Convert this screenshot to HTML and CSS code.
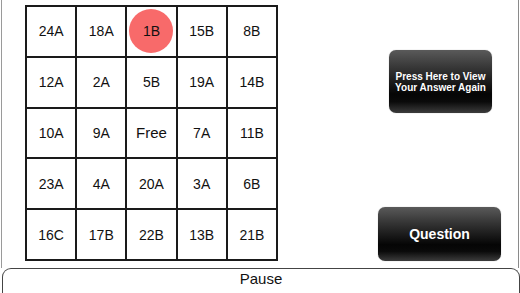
FILE: index.html
```html
<!DOCTYPE html>
<html>
<head>
<meta charset="utf-8">
<link rel="stylesheet" href="styles.css">
</head>
<body>
<div class="screen">
  <div class="main">
    <div class="board">
      <div class="cell">24A</div>
      <div class="cell">18A</div>
      <div class="cell"><span class="mark">1B</span></div>
      <div class="cell">15B</div>
      <div class="cell">8B</div>
      <div class="cell">12A</div>
      <div class="cell">2A</div>
      <div class="cell">5B</div>
      <div class="cell">19A</div>
      <div class="cell">14B</div>
      <div class="cell">10A</div>
      <div class="cell">9A</div>
      <div class="cell free">Free</div>
      <div class="cell">7A</div>
      <div class="cell">11B</div>
      <div class="cell">23A</div>
      <div class="cell">4A</div>
      <div class="cell">20A</div>
      <div class="cell">3A</div>
      <div class="cell">6B</div>
      <div class="cell">16C</div>
      <div class="cell">17B</div>
      <div class="cell">22B</div>
      <div class="cell">13B</div>
      <div class="cell">21B</div>
    </div>
    <div class="side">
      <button class="btn view">Press Here to View<br>Your Answer Again</button>
      <button class="btn question">Question</button>
    </div>
  </div>
  <div class="pause">Pause</div>
</div>
</body>
</html>
```
FILE: styles.css
```css
html, body {
  margin: 0;
  padding: 0;
  background: #fff;
}
body {
  width: 520px;
  height: 293px;
  overflow: hidden;
  font-family: "Liberation Sans", Arial, sans-serif;
}
.screen {
  display: flex;
  flex-direction: column;
  height: 293px;
}
.main {
  height: 268px;
  margin: 0 1px 0 1px;
  border-left: 1px solid #9a9a9a;
  border-right: 1px solid #8a8a8a;
  display: flex;
  box-sizing: border-box;
}
.board {
  margin: 5px 0 0 23px;
  display: grid;
  grid-template-columns: repeat(5, 48.2px);
  grid-template-rows: repeat(5, 48.8px);
  gap: 2px;
  padding: 2px;
  background: #1a1a1a;
  align-self: flex-start;
}
.cell {
  background: #fff;
  display: flex;
  align-items: center;
  justify-content: center;
  font-size: 14px;
  color: #111;
}
.free {
  font-size: 15px;
}
.mark {
  width: 44px;
  height: 44px;
  border-radius: 50%;
  background: #f86a6a;
  display: flex;
  align-items: center;
  justify-content: center;
}
.side {
  flex: 1;
  display: flex;
  flex-direction: column;
  align-items: flex-end;
  padding-top: 50px;
}
.btn {
  border: none;
  color: #fff;
  font-family: "Liberation Sans", Arial, sans-serif;
  font-weight: bold;
  border-radius: 7px;
  background: linear-gradient(to bottom, #5a5a5a 0%, #3a3a3a 25%, #1c1c1c 50%, #050505 70%, #0a0a0a 82%, #3c3c3c 100%);
  box-shadow: 0 0 1px rgba(0,0,0,0.4);
  padding: 0;
}
.view {
  width: 103px;
  height: 63px;
  font-size: 10px;
  line-height: 11px;
  margin-right: 26px;
}
.question {
  width: 123px;
  height: 54px;
  font-size: 14px;
  margin-top: 94px;
  margin-right: 17px;
}
.pause {
  flex: 1;
  margin: 0 0 0 2px;
  border: 1px solid #444;
  border-bottom: none;
  border-radius: 9px 9px 0 0;
  text-align: center;
  font-size: 15px;
  line-height: 20px;
  color: #111;
}
```
